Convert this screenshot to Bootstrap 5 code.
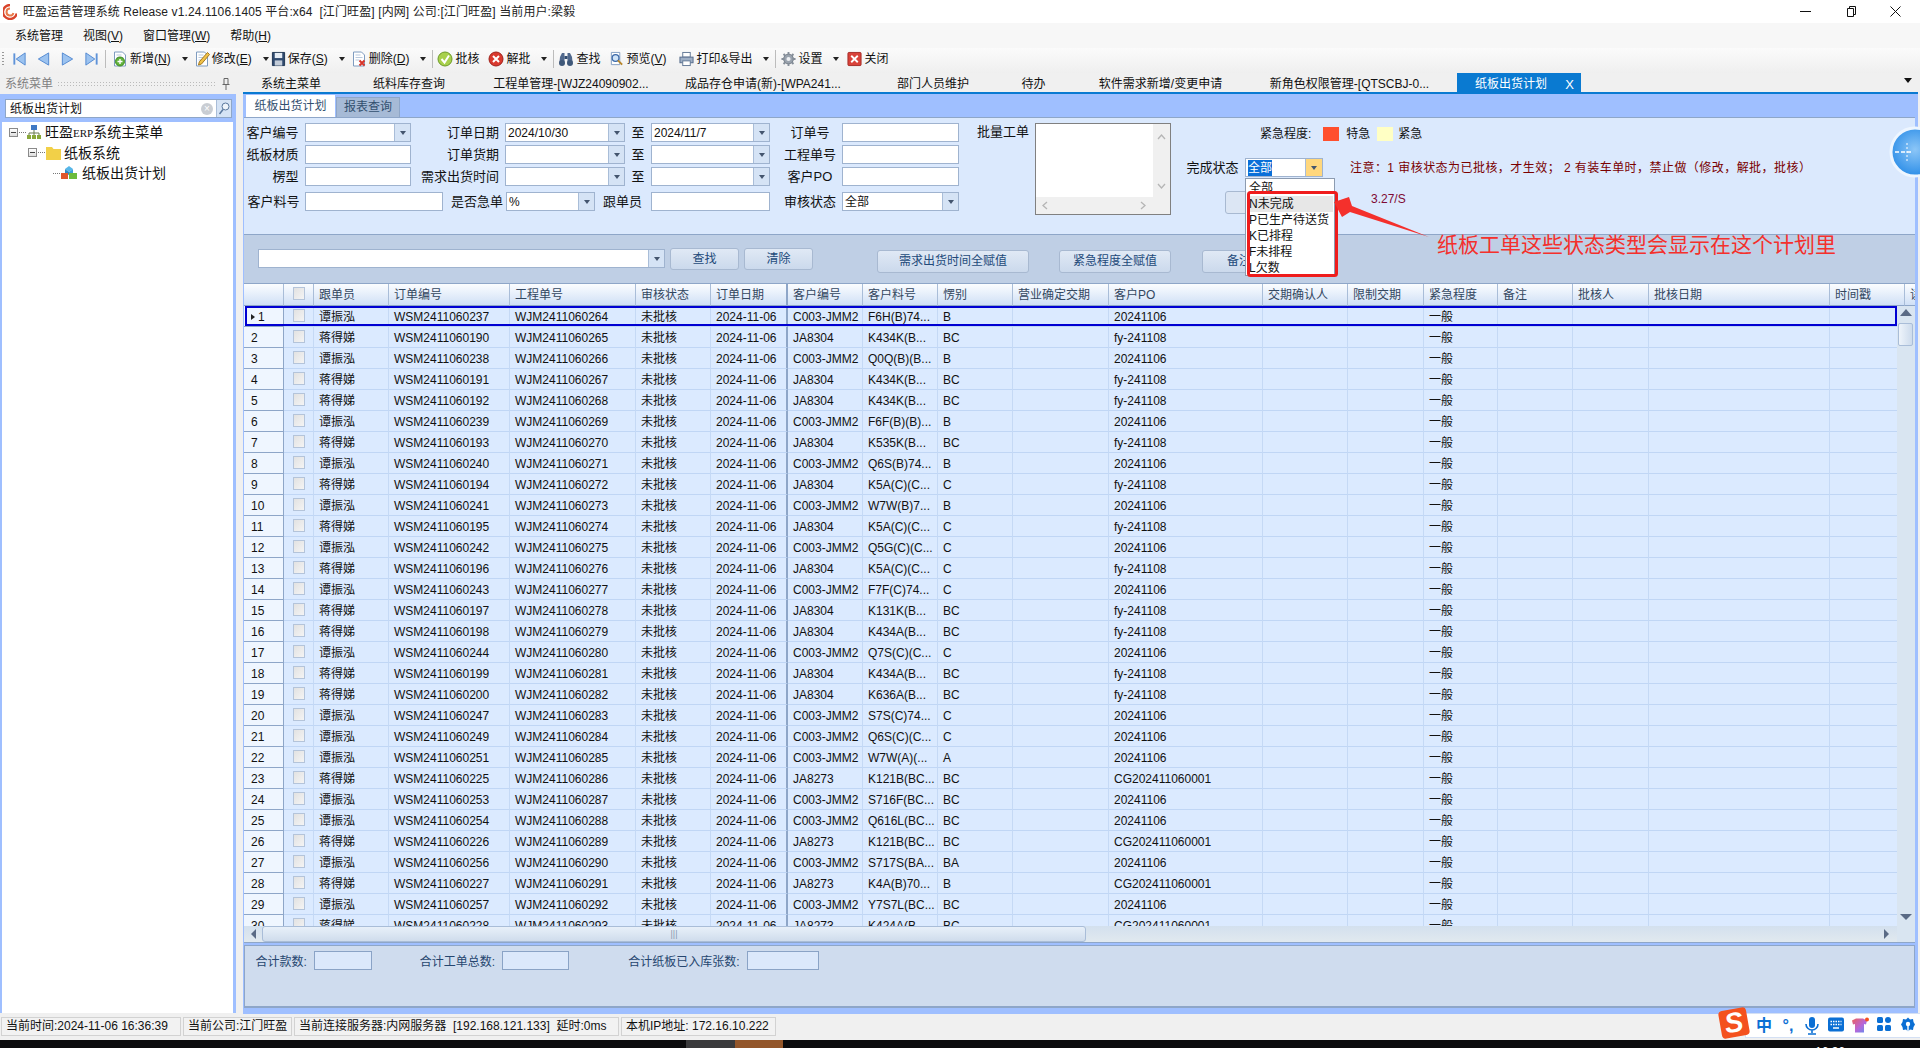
<!DOCTYPE html>
<html lang="zh-CN">
<head>
<meta charset="UTF-8">
<title>旺盈运营管理系统</title>
<link href="https://cdn.jsdelivr.net/npm/bootstrap@5.3.3/dist/css/bootstrap.min.css" rel="stylesheet">
<style>
  html, body { height: 100%; }
  body {
    width: 1920px; height: 1048px; overflow: hidden; position: relative;
    background: #f0f0f0; color: #111; font-size: 12px; line-height: 16px;
    font-family: "Liberation Sans", "Noto Sans CJK SC", sans-serif;
  }
  /* top bars */
  .ttl-bar { height: 23px; background: #fff; padding-left: 3px; }
  .ttl-bar .ttl-text { margin-left: 6px; white-space: pre; color: #222; letter-spacing: 0.11px; }
  .win-btns { margin-left: auto; gap: 34px; padding-right: 19px; }
  .mnu-bar { height: 25px; background: #f7f7f7; padding-left: 5px; }
  .mnu-bar span { padding: 0 10px; }
  .tool-bar { height: 25px; background: linear-gradient(#fbfbfb, #efefef); padding: 0 0 3px 12px; white-space: nowrap; position: relative; }
  .tool-bar svg { flex: none; }
  .tb-grip { position: absolute; left: 2px; top: 3px; width: 2px; height: 16px; background-image: radial-gradient(#999 0.7px, transparent 0.8px); background-size: 2px 3px; }
  .tb-btn { display: inline-flex; align-items: center; gap: 2px; }
  .tb-caret { width: 0; height: 0; border: 3px solid transparent; border-top: 4px solid #222; border-bottom: 0; }
  .tb-sep { width: 1px; height: 18px; background: #bcbcbc; }
  .tb-g2 { margin-left: 2px; } .tb-g3 { margin-left: 4px; } .tb-g5 { margin-left: 5px; } .tb-g6 { margin-left: 6px; }
  .tb-g7 { margin-left: 6px; } .tb-g8 { margin-left: 8px; } .tb-g9 { margin-left: 9px; } .tb-g11 { margin-left: 11px; } .tb-g13 { margin-left: 13px; }
  /* sidebar */
  .work-area { height: 941px; }
  .side-col { width: 236px; flex: none; }
  .side-head { height: 21px; color: #808080; padding: 0 5px; gap: 4px; }
  .side-dots { flex: 1; height: 6px; background-image: radial-gradient(#bbb 0.6px, transparent 0.7px); background-size: 3px 3px; }
  .side-body { height: 919px; background: #9fbfff; padding: 5px 3px 0 2px; margin-bottom: 2px; }
  .side-find { height: 19px; margin: 0 1px 0 3px; background: #fff; border: 1px solid #8ea6c8; padding-left: 4px; }
  .find-clear { margin-left: auto; width: 12px; height: 12px; border-radius: 50%; background: #c9cdd3; color: #fff; font-size: 10px; line-height: 12px; text-align: center; margin-right: 3px; }
  .find-btn { width: 15px; height: 17px; background: #d5e3f5; border-left: 1px solid #a9bdd8; }
  .tree-box { height: 891px; margin-top: 4px; background: #fff; font-size: 14px; position: relative; }
  .tree-row { height: 20.5px; white-space: nowrap; }
  .tree-l1 { padding-left: 7px; }
  .tree-l2 { padding-left: 26px; }
  .tree-l3 { padding-left: 50px; }
  .tree-box .tree-l3 svg { margin-right: 5px; }
  .tree-erp { font-size: 11px; font-family: "Liberation Serif", serif; }
  .plus-box { width: 9px; height: 9px; border: 1px solid #8a8a8a; background: linear-gradient(#fff, #ddd); position: relative; flex: none; }
  .plus-box::after { content: ""; position: absolute; left: 1px; right: 1px; top: 3px; height: 1px; background: #444; }
  .tree-dash { width: 7px; border-top: 1px dotted #777; margin: 0 1px; flex: none; }
  .tree-txt-2 { margin-left: 3px; }
  /* main */
  .main-col { width: 1675px; flex: none; margin-left: 7px; }
  .doc-tabs { height: 19px; }
  .doc-tab { text-align: center; height: 19px; line-height: 23px; white-space: nowrap; flex: none; }
  .doc-tab:nth-child(1) { width: 96px; }
  .doc-tab:nth-child(2) { width: 140px; }
  .doc-tab:nth-child(3) { width: 184px; }
  .doc-tab:nth-child(4) { width: 200px; }
  .doc-tab:nth-child(5) { width: 140px; }
  .doc-tab:nth-child(6) { width: 61px; }
  .doc-tab:nth-child(7) { width: 193px; }
  .doc-tab:nth-child(8) { width: 185px; margin-right: 15px; }
  .doc-tab.is-on { width: 124px; background: #0a7ad1; color: #fff; padding-left: 18px; text-align: left; position: relative; }
  .doc-tab.is-on b { font-weight: 400; position: absolute; right: 7px; top: 0; font-size: 13px; }
  .doc-more { margin-left: auto; margin-right: 6px; margin-top: 5px; width: 0; height: 0; border: 4px solid transparent; border-top: 5px solid #111; border-bottom: 0; }
  .tab-line { height: 2px; background: #0a7ad1; }
  .sub-tabs { height: 23px; background: #9fbfff; padding: 1px 0 0 3px; }
  .sub-tab { height: 22px; width: 89px; background: #fff; color: #33506f; text-align: center; line-height: 22px; }
  .sub-tab.is-off { width: 64px; height: 20px; margin: 2px 0 0 1px; background: #a6bad6; border: 1px solid #8ea6c8; border-bottom: 0; line-height: 19px; }
  .main-body { padding-left: 1px; padding-right: 3px; background: #9fbfff; height: 897px; }
  /* filter area */
  .flt-area { height: 117px; background: #dbe9fd; border-top: 1px solid #8ea6c8; position: relative; font-size: 13px; }
  .flt-left { width: 715px; flex: none; padding-top: 5px; }
  .flt-grid { display: grid; grid-template-columns: 60.5px 106.5px 94px 120px 26px 119px 72px 117px; grid-auto-rows: 19px; row-gap: 3px; }
  .flt-row4 { height: 19px; margin-top: 6px; }
  .lb-r { text-align: right; padding-right: 6px; line-height: 19px; white-space: nowrap; }
  .lb-c { text-align: center; padding-left: 8px; line-height: 19px; white-space: nowrap; }
  .lb-m { text-align: center; line-height: 19px; }
  .w-a { width: 60.5px; flex: none; padding-right: 5px; }
  .w-b { width: 138px; flex: none; }
  .w-c { width: 63.5px; flex: none; padding-right: 3px; }
  .w-d { width: 89px; flex: none; }
  .w-e { width: 56px; flex: none; padding-right: 9px; }
  .w-f { width: 119px; flex: none; }
  .w-g { width: 72px; flex: none; }
  .w-h { width: 117px; flex: none; }
  .fld { height: 19px; background: #fff; border: 1px solid #9fb3cf; display: flex; align-items: center; font-size: 12px; padding-left: 2px; white-space: nowrap; overflow: hidden; }
  .fld-arrow { margin-left: auto; width: 16px; height: 17px; background: #d5e3f5; border-left: 1px solid #a9bdd8; display: flex; align-items: center; justify-content: center; flex: none; }
  .fld-arrow::after { content: ""; border: 3px solid transparent; border-top: 4px solid #44556e; border-bottom: 0; }
  .flt-batch { margin-left: 18px; padding-top: 5px; width: 194px; flex: none; }
  .batch-lb { width: 58px; flex: none; line-height: 17px; }
  .batch-box { width: 136px; height: 92px; background: #fff; border: 1px solid #808080; display: grid; grid-template-columns: 1fr 17px; grid-template-rows: 1fr 17px; }
  .batch-v { background: #f0f0f0; display: flex; flex-direction: column; justify-content: space-between; align-items: center; padding: 10px 0 8px; }
  .batch-h { background: #f0f0f0; grid-column: 1 / 3; display: flex; justify-content: space-between; align-items: center; padding: 0 24px 0 6px; }
  .flt-right { position: relative; flex: 1; padding-top: 9px; font-size: 12px; }
  .rgt-a { height: 14px; margin-left: 89px; }
  .swatch { width: 16px; height: 14px; flex: none; }
  .sw-red { background: #ff4f2d; margin-left: 12px; margin-right: 7px; }
  .sw-yel { background: #ffffc4; margin-right: 5px; margin-left: 7px; }
  .rgt-b { height: 19px; margin-top: 17px; margin-left: 15.5px; white-space: nowrap; }
  .rgt-b .rgt-lb { font-size: 13px; width: 58.5px; }
  .done-box { width: 78px; flex: none; }
  .done-box span.sel { background: #0a6fd8; color: #fff; }
  .done-box .fld-arrow { background: #ffd77d; width: 17px; }
  .note-red { margin-left: 27px; color: #7a0000; letter-spacing: 0.45px; }
  .rgt-c { margin-top: 14px; margin-left: 54px; }
  .ghost-btn { width: 111px; height: 23px; flex: none; background: #dce6f4; border: 1px solid #a8b9d1; border-radius: 3px; }
  .speed-txt { margin-left: 35px; color: #7f0a33; }
  .done-list { position: absolute; left: 74px; top: 60px; width: 90px; height: 98px; background: #fff; border: 1px solid #8c9bb0; padding: 1px; z-index: 2; line-height: 16px; }
  .done-list div { height: 16px; padding-left: 2px; white-space: nowrap; }
  .done-list div.is-hover { background: #e7e7e7; }
  /* band */
  .act-band { height: 50px; background: #bfcfe5; border-top: 1px solid #8ea6c8; border-bottom: 1px solid #8ea6c8; padding-left: 14px; }
  .find-input { width: 407px; margin-top: 14px; }
  .act-btn { height: 22px; background: linear-gradient(#e0e9f5, #cbd9ec); border: 1px solid #a8b9d1; border-radius: 3px; color: #234a7a; text-align: center; line-height: 20px; flex: none; }
  .act-a { width: 69px; margin: 13px 0 0 5px; }
  .act-b { margin-top: 15px; height: 23px; line-height: 21px; }
  .act-w1 { width: 152px; margin-left: 64px; }
  .act-w2 { width: 112px; margin-left: 30px; }
  .act-w3 { width: 112px; margin-left: 31px; text-align: left; padding-left: 24px; }
  /* grid */
  .grid-wrap { height: 642px; position: relative; overflow: hidden; background: #dbeaff; }
  .grid-tb { table-layout: fixed; border-collapse: separate; border-spacing: 0; width: 1741px; }
  .grid-tb th, .grid-tb td { overflow: hidden; white-space: nowrap; padding: 1px 0 0 5px; font-weight: 400; }
  .grid-tb th { height: 22px; background: linear-gradient(#fbfdff, #d0e0f6); color: #33475f; border-right: 1px solid #a9bdd8; border-bottom: 1px solid #8ea6c8; }
  .grid-tb td { height: 21px; background: #dbeaff; border-right: 1px solid #c5d9f5; border-bottom: 1px solid #c0d6f5; }
  .grid-tb .cell-rh { background: #eff6ff; border-right: 1px solid #8ea6c8; border-bottom: 1px solid #8ea6c8; padding-left: 7px; }
  .grid-tb .cell-ck { padding: 0; text-align: center; }
  .grid-tb .cell-split { border-right: 2px solid #8ea6c8; }
  .row-mark { display: inline-block; border: 3px solid transparent; border-left: 4px solid #222; border-right: 0; margin-right: 3px; vertical-align: 1px; }
  .ck-box { display: block; width: 12px; height: 13px; margin: 0 auto 2px; border: 1px solid #b4c4da; background: linear-gradient(135deg, #e2e2e2, #f4f4f4); }
  .row-focus { position: absolute; left: 1px; top: 22px; width: 1652px; height: 20px; border: 2px solid #0000d2; pointer-events: none; }
  .v-scroll { position: absolute; right: 0; top: 22px; bottom: 0; width: 18px; background: #d9e5f1; }
  .v-up, .v-down { position: absolute; left: 3px; border: 6px solid transparent; }
  .v-up { top: 3px; border-bottom: 7px solid #5a6a85; border-top: 0; }
  .v-down { bottom: 6px; border-top: 6px solid #5a6a85; border-bottom: 0; }
  .v-thumb { position: absolute; left: 1px; right: 2px; top: 17px; height: 23px; background: linear-gradient(90deg, #eef4fb, #cddbec); border: 1px solid #a9bdd8; border-radius: 2px; }
  .h-scroll { height: 17px; background: linear-gradient(#d3e0ee, #e1e9ef); position: relative; border-bottom: 1px solid #8ea6c8; }
  .h-left, .h-right { position: absolute; top: 3px; border: 5px solid transparent; }
  .h-left { left: 7px; border-right: 5px solid #5a6a85; border-left: 0; }
  .h-right { right: 26px; border-left: 5px solid #5a6a85; border-right: 0; }
  .h-thumb { position: absolute; left: 18px; width: 824px; top: 0; bottom: 0; background: linear-gradient(#e8f0f9, #cfdcec); border: 1px solid #a9bdd8; border-radius: 3px; text-align: center; color: #8a9ab0; font-size: 9px; line-height: 14px; }
  .h-corner { position: absolute; right: 0; top: 0; bottom: 0; width: 18px; background: #d9e5f1; }
  /* totals */
  .sum-panel { height: 63px; margin-top: 2px; background: #cfdcee; border: 1px solid #8ea6c8; border-bottom-width: 2px; position: relative; color: #26466f; padding: 5px 0 0 10.5px; font-size: 12px; }
  .sum-lb { white-space: nowrap; line-height: 22px; }
  .sum-box { height: 19px; background: #dbe8fb; border: 1px solid #8aa3c6; flex: none; }
  .sum-1 { width: 58px; margin: 0 48px 0 7px; }
  .sum-2 { width: 67px; margin: 0 59px 0 7px; }
  .sum-3 { width: 72px; margin-left: 7px; }
  /* status bar */
  .stat-bar { height: 26px; background: #f0f0f0; padding: 3px 0 0 1px; gap: 2px; position: relative; }
  .stat-cell { height: 19px; line-height: 17px; padding-left: 4px; background: #f2f2f2; border: 1px solid #d2d2d2; white-space: pre; flex: none; }
  .sc-1 { width: 180px; } .sc-2 { width: 109px; } .sc-3 { width: 325px; } .sc-4 { width: 155px; }
  .ime-bar { position: absolute; left: 1745px; top: -1px; width: 175px; height: 25px; background: #fff; border: 1px solid #d4e0f4; border-right: 0; color: #0b6fd4; padding-left: 6px; }
  .ime-logo { position: absolute; left: 1720px; top: -5px; width: 28px; height: 28px; background: #f4511e; border-radius: 4px; transform: rotate(-10deg); color: #fff; font: italic 700 28px/27px "Liberation Sans", sans-serif; text-align: center; z-index: 2; }
  .ime-item { width: 24px; height: 23px; flex: none; text-align: center; font-weight: 700; font-size: 16px; line-height: 23px; }
  .ime-item svg { display: block; margin: 3px auto 0; }
  .task-bar { height: 8px; background: #0b0b0d; position: relative; overflow: hidden; }
  .task-a, .task-b { position: absolute; top: 0; bottom: 0; }
  .task-a { left: 686px; width: 49px; background: #3a3a3c; }
  .task-b { left: 735px; width: 48px; background: #93562a; }
  .task-clock { position: absolute; left: 1815px; top: 5px; color: #fff; font-size: 12px; line-height: 14px; }
  /* annotation on top of the screenshot */
  .anno-svg { position: absolute; left: 0; top: 0; pointer-events: none; z-index: 5; }
  .anno-text { position: absolute; left: 1437px; top: 232px; font-size: 21px; line-height: 26px; color: #f4302c; white-space: nowrap; z-index: 5; }
</style>
</head>
<body>

<svg width="0" height="0" class="position-absolute">
  <defs>
    <symbol id="i-first" viewBox="0 0 16 16"><rect x="1.5" y="2" width="2" height="12" fill="#5f93d8"/><path d="M14 1.5v13L4.5 8z" fill="#9cc3f0" stroke="#4f86d0"/></symbol>
    <symbol id="i-prev" viewBox="0 0 16 16"><path d="M13.5 1.5v13L2.5 8z" fill="#9cc3f0" stroke="#4f86d0"/></symbol>
    <symbol id="i-next" viewBox="0 0 16 16"><path d="M2.5 1.5v13L13.5 8z" fill="#9cc3f0" stroke="#4f86d0"/></symbol>
    <symbol id="i-last" viewBox="0 0 16 16"><rect x="12.5" y="2" width="2" height="12" fill="#5f93d8"/><path d="M2 1.5v13L11.5 8z" fill="#9cc3f0" stroke="#4f86d0"/></symbol>
    <symbol id="i-page" viewBox="0 0 16 16"><path d="M2.5 1h8l3 3v11h-11z" fill="#fff" stroke="#7f9cc0"/><path d="M4.5 4h5M4.5 6.5h7M4.5 9h4" stroke="#b9c9dd"/></symbol>
    <symbol id="i-add" viewBox="0 0 16 16"><use href="#i-page"/><circle cx="8" cy="10.5" r="4.5" fill="#62b33c" stroke="#3f8a22"/><path d="M5.5 10.5h5M8 8v5" stroke="#fff" stroke-width="1.4"/></symbol>
    <symbol id="i-edit" viewBox="0 0 16 16"><use href="#i-page"/><path d="M13.5 1.5l2 2-8 9.5-3 1 .8-3.2z" fill="#f0c24a" stroke="#a5781e"/></symbol>
    <symbol id="i-save" viewBox="0 0 16 16"><path d="M1.5 1h13v14h-13z" fill="#2f4a6f" stroke="#1d3350"/><rect x="4" y="1.5" width="8" height="5.5" fill="#e6edf5"/><rect x="4" y="9.5" width="8" height="5.5" fill="#c3ccd8"/></symbol>
    <symbol id="i-del" viewBox="0 0 16 16"><use href="#i-page"/><path d="M8.5 9.5l5 5M13.5 9.5l-5 5" stroke="#d8352a" stroke-width="2"/></symbol>
    <symbol id="i-ok" viewBox="0 0 16 16"><circle cx="8" cy="8" r="7" fill="#a8d04c" stroke="#6d9a28"/><path d="M4.5 8l3 3.5 4.5-7" fill="none" stroke="#fff" stroke-width="2"/></symbol>
    <symbol id="i-no" viewBox="0 0 16 16"><circle cx="8" cy="8" r="7" fill="#d9392e" stroke="#9f2019"/><path d="M5 5l6 6M11 5l-6 6" stroke="#fff" stroke-width="2"/></symbol>
    <symbol id="i-bino" viewBox="0 0 16 16"><path d="M2 6l2-4h2.500v9H1.500z M14 6l-2-4H9.500v9h5z" fill="#50688c"/><rect x="6.500" y="5" width="3" height="3" fill="#2f4a6f"/><circle cx="4" cy="12" r="3" fill="#3f5879"/><circle cx="12" cy="12" r="3" fill="#3f5879"/></symbol>
    <symbol id="i-view" viewBox="0 0 16 16"><path d="M2.500 1h9v13h-9z" fill="#fff" stroke="#7f9cc0"/><circle cx="7" cy="7" r="3.600" fill="#cfe3f7" stroke="#3a68a8" stroke-width="1.300"/><path d="M9.500 9.500l4.500 4.500" stroke="#b8862a" stroke-width="2"/></symbol>
    <symbol id="i-print" viewBox="0 0 16 16"><rect x="4" y="1" width="8" height="5" fill="#fff" stroke="#5f7694"/><rect x="1" y="6" width="14" height="6" fill="#9fb0c6" stroke="#54698a"/><rect x="4" y="10" width="8" height="5" fill="#fff" stroke="#5f7694"/></symbol>
    <symbol id="i-gear" viewBox="0 0 16 16"><circle cx="8" cy="8" r="5.200" fill="#9aa3ae" stroke="#6c7580"/><circle cx="8" cy="8" r="2.200" fill="#eef0f3"/><path d="M8 .500v3M8 12.500v3M.500 8h3M12.500 8h3M2.700 2.700l2.100 2.100M11.200 11.200l2.100 2.100M13.300 2.700l-2.100 2.100M4.800 11.200l-2.100 2.100" stroke="#858e99" stroke-width="2"/></symbol>
    <symbol id="i-close" viewBox="0 0 16 16"><rect x="1" y="1" width="14" height="14" rx="1" fill="#d9423a" stroke="#a32a24"/><path d="M4.500 4.500l7 7M11.500 4.500l-7 7" stroke="#fff" stroke-width="2"/></symbol>
    <symbol id="i-chev-u" viewBox="0 0 9 6"><path d="M1 5l3.500-4L8 5" fill="none" stroke="#b5b5b5" stroke-width="1.300"/></symbol>
    <symbol id="i-chev-d" viewBox="0 0 9 6"><path d="M1 1l3.500 4L8 1" fill="none" stroke="#b5b5b5" stroke-width="1.300"/></symbol>
    <symbol id="i-chev-l" viewBox="0 0 6 9"><path d="M5 1L1 4.500 5 8" fill="none" stroke="#b5b5b5" stroke-width="1.300"/></symbol>
    <symbol id="i-chev-r" viewBox="0 0 6 9"><path d="M1 1l4 3.500L1 8" fill="none" stroke="#b5b5b5" stroke-width="1.300"/></symbol>
  </defs>
</svg>

<div class="ttl-bar d-flex align-items-center">
  <svg width="14" height="16" viewBox="0 0 14 16"><path d="M7 1a7 7 0 1 0 6.800 8.500" fill="none" stroke="#d9432b" stroke-width="2.400"/><path d="M7 4.500a3.500 3.500 0 1 0 3.400 4.400" fill="none" stroke="#e97a4a" stroke-width="2"/></svg>
  <span class="ttl-text">旺盈运营管理系统 Release v1.24.1106.1405 平台:x64  [江门旺盈] [内网] 公司:[江门旺盈] 当前用户:梁毅</span>
  <div class="win-btns d-flex align-items-center">
    <svg width="11" height="11" viewBox="0 0 11 11"><path d="M0 5.500h11" stroke="#111"/></svg>
    <svg width="11" height="11" viewBox="0 0 11 11"><path d="M2.500 2.500h6v8h-6zM4.500 2.500V.5h6v8H8.500" fill="none" stroke="#111"/></svg>
    <svg width="11" height="11" viewBox="0 0 11 11"><path d="M.5.500l10 10M10.500.500l-10 10" stroke="#111"/></svg>
  </div>
</div>

<div class="mnu-bar d-flex align-items-center">
  <span>系统管理</span><span>视图(<u>V</u>)</span><span>窗口管理(<u>W</u>)</span><span>帮助(<u>H</u>)</span>
</div>

<div class="tool-bar d-flex align-items-center">
  <span class="tb-grip"></span>
  <svg width="15" height="16"><use href="#i-first"/></svg>
  <svg width="15" height="16" class="tb-g9"><use href="#i-prev"/></svg>
  <svg width="15" height="16" class="tb-g9"><use href="#i-next"/></svg>
  <svg width="15" height="16" class="tb-g9"><use href="#i-last"/></svg>
  <span class="tb-sep tb-g7"></span>
  <span class="tb-btn tb-g6"><svg width="16" height="16"><use href="#i-add"/></svg><span>新增(<u>N</u>)</span></span><span class="tb-caret tb-g11"></span>
  <span class="tb-btn tb-g6"><svg width="16" height="16"><use href="#i-edit"/></svg><span>修改(<u>E</u>)</span></span><span class="tb-caret tb-g11"></span>
  <span class="tb-btn tb-g2"><svg width="15" height="16"><use href="#i-save"/></svg><span>保存(<u>S</u>)</span></span><span class="tb-caret tb-g11"></span>
  <span class="tb-btn tb-g6"><svg width="16" height="16"><use href="#i-del"/></svg><span>删除(<u>D</u>)</span></span><span class="tb-caret tb-g11"></span>
  <span class="tb-sep tb-g7"></span>
  <span class="tb-btn tb-g3"><svg width="16" height="16"><use href="#i-ok"/></svg><span>批核</span></span>
  <span class="tb-btn tb-g9"><svg width="16" height="16"><use href="#i-no"/></svg><span>解批</span></span><span class="tb-caret tb-g11"></span>
  <span class="tb-sep tb-g7"></span>
  <span class="tb-btn tb-g3"><svg width="16" height="16"><use href="#i-bino"/></svg><span>查找</span></span>
  <span class="tb-btn tb-g9"><svg width="15" height="16"><use href="#i-view"/></svg><span>预览(<u>V</u>)</span></span>
  <span class="tb-btn tb-g13"><svg width="15" height="16"><use href="#i-print"/></svg><span>打印&amp;导出</span></span><span class="tb-caret tb-g11"></span>
  <span class="tb-sep tb-g7"></span>
  <span class="tb-btn tb-g5"><svg width="15" height="16"><use href="#i-gear"/></svg><span>设置</span></span><span class="tb-caret tb-g11"></span>
  <span class="tb-btn tb-g8"><svg width="15" height="16"><use href="#i-close"/></svg><span>关闭</span></span>
</div>

<div class="work-area d-flex">
  <div class="side-col">
    <div class="side-head d-flex align-items-center">
      <span>系统菜单</span><span class="side-dots"></span>
      <svg width="10" height="12" viewBox="0 0 10 12"><path d="M3 .5h4v6H3zM1.500 6.500h7M5 6.500V12" fill="none" stroke="#666"/></svg>
    </div>
    <div class="side-body">
      <div class="side-find d-flex align-items-center">
        <span>纸板出货计划</span><span class="find-clear">×</span>
        <span class="find-btn d-flex align-items-center justify-content-center">
          <svg width="12" height="13" viewBox="0 0 12 13"><circle cx="7.500" cy="4.500" r="3.500" fill="#eef4fb" stroke="#5a789e"/><path d="M5 7.500L1.500 12" stroke="#5a789e" stroke-width="1.500"/></svg>
        </span>
      </div>
      <div class="tree-box">
        <div class="tree-row tree-l1 d-flex align-items-center">
          <span class="plus-box"></span><span class="tree-dash"></span>
          <svg width="14" height="14" viewBox="0 0 14 14"><rect x="4" y="0" width="6" height="5" fill="#3f78c4"/><path d="M7 5v3M2 11V8h10v3M7 8v3" fill="none" stroke="#6a7a50"/><rect x="0" y="10" width="4" height="4" fill="#8aa83a"/><rect x="5" y="10" width="4" height="4" fill="#8aa83a"/><rect x="10" y="10" width="4" height="4" fill="#8aa83a"/></svg>
          <span class="ms-1">旺盈<span class="tree-erp">ERP</span>系统主菜单</span>
        </div>
        <div class="tree-row tree-l2 d-flex align-items-center">
          <span class="plus-box"></span><span class="tree-dash"></span>
          <svg width="15" height="14" viewBox="0 0 15 14"><path d="M0 1h6l1.500 2H15v11H0z" fill="#f2d048"/></svg>
          <span class="tree-txt-2">纸板系统</span>
        </div>
        <div class="tree-row tree-l3 d-flex align-items-center">
          <span class="tree-dash"></span>
          <svg width="16" height="14" viewBox="0 0 16 14"><path d="M4 3l4-3 4 3-4 3z" fill="#56b6e8"/><path d="M4 3v4l4 2V6z" fill="#2f8ac4"/><path d="M12 3v4l-4 2V6z" fill="#3f9fd8"/><rect x="0" y="7" width="7" height="6" fill="#e0562c"/><rect x="8" y="7" width="8" height="6" fill="#6cbb3c"/></svg>
          <span>纸板出货计划</span>
        </div>
      </div>
    </div>
  </div>

  <div class="main-col">
    <div class="doc-tabs d-flex align-items-start">
      <span class="doc-tab">系统主菜单</span>
      <span class="doc-tab">纸料库存查询</span>
      <span class="doc-tab">工程单管理-[WJZ24090902...</span>
      <span class="doc-tab">成品存仓申请(新)-[WPA241...</span>
      <span class="doc-tab">部门人员维护</span>
      <span class="doc-tab">待办</span>
      <span class="doc-tab">软件需求新增/变更申请</span>
      <span class="doc-tab">新角色权限管理-[QTSCBJ-0...</span>
      <span class="doc-tab is-on">纸板出货计划<b>X</b></span>
      <span class="doc-more"></span>
    </div>
    <div class="tab-line"></div>
    <div class="sub-tabs d-flex">
      <span class="sub-tab">纸板出货计划</span>
      <span class="sub-tab is-off">报表查询</span>
    </div>
    <div class="main-body">
      <div class="flt-area d-flex">
        <div class="flt-left">
          <div class="flt-grid">
            <span class="lb-r">客户编号</span><span class="fld"><span class="fld-arrow"></span></span>
            <span class="lb-r">订单日期</span><span class="fld">2024/10/30<span class="fld-arrow"></span></span>
            <span class="lb-m">至</span><span class="fld">2024/11/7<span class="fld-arrow"></span></span>
            <span class="lb-c">订单号</span><span class="fld"></span>

            <span class="lb-r">纸板材质</span><span class="fld"></span>
            <span class="lb-r">订单货期</span><span class="fld"><span class="fld-arrow"></span></span>
            <span class="lb-m">至</span><span class="fld"><span class="fld-arrow"></span></span>
            <span class="lb-c">工程单号</span><span class="fld"></span>

            <span class="lb-r">楞型</span><span class="fld"></span>
            <span class="lb-r">需求出货时间</span><span class="fld"><span class="fld-arrow"></span></span>
            <span class="lb-m">至</span><span class="fld"><span class="fld-arrow"></span></span>
            <span class="lb-c">客户PO</span><span class="fld"></span>
          </div>
          <div class="flt-row4 d-flex">
            <span class="lb-r w-a">客户料号</span><span class="fld w-b"></span>
            <span class="lb-r w-c">是否急单</span><span class="fld w-d">%<span class="fld-arrow"></span></span>
            <span class="lb-r w-e">跟单员</span><span class="fld w-f"></span>
            <span class="lb-c w-g">审核状态</span><span class="fld w-h">全部<span class="fld-arrow"></span></span>
          </div>
        </div>
        <div class="flt-batch d-flex">
          <span class="batch-lb">批量工单</span>
          <div class="batch-box">
            <span></span>
            <span class="batch-v">
              <svg width="9" height="6"><use href="#i-chev-u"/></svg>
              <svg width="9" height="6"><use href="#i-chev-d"/></svg>
            </span>
            <span class="batch-h">
              <svg width="6" height="9"><use href="#i-chev-l"/></svg>
              <svg width="6" height="9"><use href="#i-chev-r"/></svg>
            </span>
          </div>
        </div>
        <div class="flt-right">
          <div class="rgt-a d-flex align-items-center">
            <span>紧急程度:</span><span class="swatch sw-red"></span><span>特急</span><span class="swatch sw-yel"></span><span>紧急</span>
          </div>
          <div class="rgt-b d-flex align-items-center">
            <span class="rgt-lb">完成状态</span>
            <span class="fld done-box"><span class="sel">全部</span><span class="fld-arrow"></span></span>
            <span class="note-red">注意：1 审核状态为已批核，才生效；  2 有装车单时，禁止做（修改，解批，批核）</span>
          </div>
          <div class="rgt-c d-flex">
            <span class="ghost-btn"></span><span class="speed-txt">3.27/S</span>
          </div>
          <div class="done-list">
            <div>全部</div>
            <div class="is-hover">N未完成</div>
            <div>P已生产待送货</div>
            <div>K已排程</div>
            <div>F未排程</div>
            <div>L欠数</div>
          </div>
        </div>
      </div>

      <div class="act-band d-flex">
        <span class="fld find-input"><span class="fld-arrow"></span></span>
        <span class="act-btn act-a">查找</span>
        <span class="act-btn act-a">清除</span>
        <span class="act-btn act-b act-w1">需求出货时间全赋值</span>
        <span class="act-btn act-b act-w2">紧急程度全赋值</span>
        <span class="act-btn act-b act-w3">备注</span>
      </div>

      <div class="grid-wrap">
        <table class="grid-tb">
          <colgroup id="gridCols"></colgroup>
          <thead><tr id="gridHead"></tr></thead>
          <tbody id="gridRows"></tbody>
        </table>
        <div class="row-focus"></div>
        <div class="v-scroll"><span class="v-up"></span><span class="v-thumb"></span><span class="v-down"></span></div>
      </div>
      <div class="h-scroll">
        <span class="h-left"></span><span class="h-thumb">|||</span><span class="h-right"></span><span class="h-corner"></span>
      </div>

      <div class="sum-panel d-flex align-items-start">
        <span class="sum-lb">合计款数:</span><span class="sum-box sum-1"></span>
        <span class="sum-lb">合计工单总数:</span><span class="sum-box sum-2"></span>
        <span class="sum-lb">合计纸板已入库张数:</span><span class="sum-box sum-3"></span>
      </div>
    </div>
  </div>
</div>

<div class="stat-bar d-flex">
  <span class="stat-cell sc-1">当前时间:2024-11-06 16:36:39</span>
  <span class="stat-cell sc-2">当前公司:江门旺盈</span>
  <span class="stat-cell sc-3">当前连接服务器:内网服务器  [192.168.121.133]  延时:0ms</span>
  <span class="stat-cell sc-4">本机IP地址: 172.16.10.222</span>
  <span class="ime-logo">S</span>
  <div class="ime-bar d-flex">
    <span class="ime-item">中</span>
    <span class="ime-item">°,</span>
    <span class="ime-item"><svg width="14" height="18" viewBox="0 0 14 18"><rect x="4" y="0" width="6" height="11" rx="3" fill="#0b6fd4"/><path d="M1 7a6 6 0 0 0 12 0M7 13v3M3 17h8" fill="none" stroke="#0b6fd4" stroke-width="1.600"/></svg></span>
    <span class="ime-item"><svg width="16" height="15" viewBox="0 0 16 14"><rect width="16" height="14" rx="2" fill="#0b6fd4"/><path d="M2.500 4h11M2.500 7h11" stroke="#fff" stroke-width="1.400" stroke-dasharray="1.500 1"/><path d="M5 10.500h6" stroke="#fff" stroke-width="1.500"/></svg></span>
    <span class="ime-item"><svg width="18" height="17" viewBox="0 0 18 16"><defs><linearGradient id="shirtFill" x1="0" y1="0" x2="1" y2="1"><stop offset="0" stop-color="#ee5f5a"/><stop offset=".55" stop-color="#b866d8"/><stop offset="1" stop-color="#5a90f0"/></linearGradient></defs><path d="M1 3l4-2h7l4 2-1 4-2-.5V15H4V6.500L2 7z" fill="url(#shirtFill)"/><circle cx="16" cy="2" r="2" fill="#f4511e"/></svg></span>
    <span class="ime-item"><svg width="14" height="14" viewBox="0 0 14 14" fill="#0b6fd4"><rect width="6" height="6" rx="1.500"/><rect x="8" width="6" height="6" rx="3"/><rect y="8" width="6" height="6" rx="1.500"/><rect x="8" y="8" width="6" height="6" rx="1.500"/></svg></span>
    <span class="ime-item"><svg width="14" height="16" viewBox="0 0 14 16"><path d="M7 .500l2 2 3-.5.5 3 1.500 2.500-1.500 2.500-.5 3-3-.5-2 2-2-2-3 .5-.5-3L0 7.500 1.500 5 2 2l3 .5z" fill="#0b6fd4"/><circle cx="7" cy="7" r="2.200" fill="#fff"/><path d="M7 8v7" stroke="#fff" stroke-width="1.400"/></svg></span>
  </div>
</div>
<div class="task-bar">
  <span class="task-a"></span><span class="task-b"></span><span class="task-clock">16:36</span>
</div>

<svg class="anno-svg" width="1920" height="1048" viewBox="0 0 1920 1048">
  <defs>
    <radialGradient id="ballFill" cx="50%" cy="45%" r="55%"><stop offset="0" stop-color="#8cc6f7"/><stop offset="1" stop-color="#2e8fe8"/></radialGradient>
  </defs>
  <circle cx="1915" cy="152" r="24" fill="url(#ballFill)" stroke="#eef6ff" stroke-width="3"/>
  <path d="M1895 152h17" stroke="#fff" stroke-width="1.500" stroke-dasharray="4 2"/>
  <path d="M1907 143v18" stroke="#fff" stroke-width="1" stroke-dasharray="2 2"/>
  <rect x="1248.500" y="192.500" width="88" height="83" rx="2" fill="none" stroke="#ef1c1c" stroke-width="3"/>
  <path d="M1334 202L1349 197L1352 206L1429 237L1350 212L1342 217Z" fill="#f4302c"/>
</svg>
<div class="anno-text">纸板工单这些状态类型会显示在这个计划里</div>

<script>
// 列宽和表头
const colEdges = [244,284,314,389,510,636,711,788,863,938,1013,1109,1263,1348,1424,1498,1573,1649,1830,1905,1985];
const heads = ['','','跟单员','订单编号','工程单号','审核状态','订单日期','客户编号','客户料号','愣别','营业确定交期','客户PO','交期确认人','限制交期','紧急程度','备注','批核人','批核日期','时间戳','读'];

document.getElementById('gridCols').innerHTML = heads.map((h, i) =>
  `<col style="width:${colEdges[i + 1] - colEdges[i]}px">`).join('');

document.getElementById('gridHead').innerHTML = heads.map((h, i) => {
  if (i === 1) return '<th class="cell-ck"><span class="ck-box"></span></th>';
  return `<th${i === 6 ? ' class="cell-split"' : ''}>${h}</th>`;
}).join('');

// t=谭振泓 C003, j=蒋得娣 JA8304, g=蒋得娣 JA8273
const kinds = {
  t: ['谭振泓', 'C003-JMM2', '20241106'],
  j: ['蒋得娣', 'JA8304', 'fy-241108'],
  g: ['蒋得娣', 'JA8273', 'CG202411060001']
};
const rows = [
  ['t','237','F6H(B)74...','B'],['j','190','K434K(B...','BC'],['t','238','Q0Q(B)(B...','B'],
  ['j','191','K434K(B...','BC'],['j','192','K434K(B...','BC'],['t','239','F6F(B)(B)...','B'],
  ['j','193','K535K(B...','BC'],['t','240','Q6S(B)74...','B'],['j','194','K5A(C)(C...','C'],
  ['t','241','W7W(B)7...','B'],['j','195','K5A(C)(C...','C'],['t','242','Q5G(C)(C...','C'],
  ['j','196','K5A(C)(C...','C'],['t','243','F7F(C)74...','C'],['j','197','K131K(B...','BC'],
  ['j','198','K434A(B...','BC'],['t','244','Q7S(C)(C...','C'],['j','199','K434A(B...','BC'],
  ['j','200','K636A(B...','BC'],['t','247','S7S(C)74...','C'],['t','249','Q6S(C)(C...','C'],
  ['t','251','W7W(A)(...','A'],['g','225','K121B(BC...','BC'],['t','253','S716F(BC...','BC'],
  ['t','254','Q616L(BC...','BC'],['g','226','K121B(BC...','BC'],['t','256','S717S(BA...','BA'],
  ['g','227','K4A(B)70...','B'],['t','257','Y7S7L(BC...','BC'],['g','228','K424A(B...','BC']
];

document.getElementById('gridRows').innerHTML = rows.map((r, i) => {
  const k = kinds[r[0]];
  const mark = i === 0 ? '<span class="row-mark"></span>' : '';
  return `<tr>
    <td class="cell-rh">${mark}${i + 1}</td>
    <td class="cell-ck"><span class="ck-box"></span></td>
    <td>${k[0]}</td><td>WSM2411060${r[1]}</td><td>WJM2411060${264 + i}</td><td>未批核</td>
    <td class="cell-split">2024-11-06</td><td>${k[1]}</td><td>${r[2]}</td><td>${r[3]}</td><td></td>
    <td>${k[2]}</td><td></td><td></td><td>一般</td><td></td><td></td><td></td><td></td><td></td>
  </tr>`;
}).join('');
</script>
<script src="https://cdn.jsdelivr.net/npm/bootstrap@5.3.3/dist/js/bootstrap.bundle.min.js"></script>
</body>
</html>
